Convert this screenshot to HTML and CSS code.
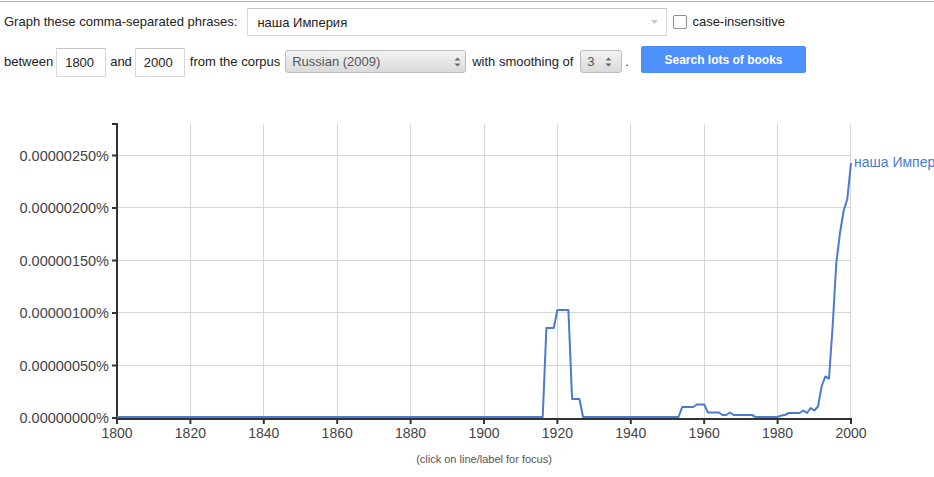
FILE: index.html
```html
<!DOCTYPE html>
<html lang="en">
<head>
<meta charset="utf-8">
<title>Ngram Viewer</title>
<link rel="stylesheet" href="styles.css">
</head>
<body>
<div class="rule"></div>
<form class="controls">
  <div class="row row-phrases">
    <span class="label label-graph">Graph these comma-separated phrases:</span>
    <div class="textbox phrases">
      <span class="value">наша Империя</span>
      <svg class="dd-arrow" width="7" height="4" viewBox="0 0 7 4"><path d="M0 0H7L3.5 4Z" fill="#c8c8c8"/></svg>
    </div>
    <span class="checkbox"></span>
    <span class="label">case-insensitive</span>
  </div>
  <div class="row row-range">
    <span class="label">between</span>
    <div class="textbox year">1800</div>
    <span class="label">and</span>
    <div class="textbox year">2000</div>
    <span class="label label-corpus">from the corpus</span>
    <div class="select corpus">
      <span class="value">Russian (2009)</span>
      <svg class="spinner" width="7" height="12" viewBox="0 0 7 12"><path d="M0.5 4.5L3.5 1.5L6.5 4.5Z M0.5 7.5L3.5 10.5L6.5 7.5Z" fill="#666"/></svg>
    </div>
    <span class="label label-smooth">with smoothing of</span>
    <div class="select smoothing">
      <span class="value">3</span>
      <svg class="spinner" width="7" height="12" viewBox="0 0 7 12"><path d="M0.5 4.5L3.5 1.5L6.5 4.5Z M0.5 7.5L3.5 10.5L6.5 7.5Z" fill="#666"/></svg>
    </div>
    <span class="label label-dot">.</span>
    <button type="button" class="search">Search lots of books</button>
  </div>
</form>

<svg class="chart" width="934" height="340" viewBox="0 110 934 340">
  <g class="grid" stroke="#d6d6d6" stroke-width="1">
    <line x1="118" y1="155.5" x2="851" y2="155.5"/>
    <line x1="118" y1="207.5" x2="851" y2="207.5"/>
    <line x1="118" y1="260.5" x2="851" y2="260.5"/>
    <line x1="118" y1="312.5" x2="851" y2="312.5"/>
    <line x1="118" y1="365.5" x2="851" y2="365.5"/>
    <line x1="190.5" y1="124" x2="190.5" y2="418"/>
    <line x1="263.5" y1="124" x2="263.5" y2="418"/>
    <line x1="337.5" y1="124" x2="337.5" y2="418"/>
    <line x1="410.5" y1="124" x2="410.5" y2="418"/>
    <line x1="484.5" y1="124" x2="484.5" y2="418"/>
    <line x1="557.5" y1="124" x2="557.5" y2="418"/>
    <line x1="630.5" y1="124" x2="630.5" y2="418"/>
    <line x1="704.5" y1="124" x2="704.5" y2="418"/>
    <line x1="777.5" y1="124" x2="777.5" y2="418"/>
    <line x1="850.5" y1="124" x2="850.5" y2="418"/>
  </g>
  <g class="axes" stroke="#333" stroke-width="2">
    <line x1="117" y1="123" x2="117" y2="420"/>
    <line x1="112" y1="124" x2="118" y2="124"/>
    <line x1="112" y1="155.5" x2="117" y2="155.5"/>
    <line x1="112" y1="208" x2="117" y2="208"/>
    <line x1="112" y1="260.5" x2="117" y2="260.5"/>
    <line x1="112" y1="313" x2="117" y2="313"/>
    <line x1="112" y1="365.5" x2="117" y2="365.5"/>
    <line x1="112" y1="418" x2="117" y2="418"/>
    <line x1="116" y1="419" x2="852" y2="419"/>
    <line x1="117" y1="419" x2="117" y2="424"/>
    <line x1="190.4" y1="419" x2="190.4" y2="424"/>
    <line x1="263.8" y1="419" x2="263.8" y2="424"/>
    <line x1="337.2" y1="419" x2="337.2" y2="424"/>
    <line x1="410.6" y1="419" x2="410.6" y2="424"/>
    <line x1="484" y1="419" x2="484" y2="424"/>
    <line x1="557.4" y1="419" x2="557.4" y2="424"/>
    <line x1="630.8" y1="419" x2="630.8" y2="424"/>
    <line x1="704.2" y1="419" x2="704.2" y2="424"/>
    <line x1="777.6" y1="419" x2="777.6" y2="424"/>
    <line x1="851" y1="419" x2="851" y2="424"/>
  </g>
  <g class="ylabels">
    <text x="109" y="160.5">0.00000250%</text>
    <text x="109" y="213">0.00000200%</text>
    <text x="109" y="265.5">0.00000150%</text>
    <text x="109" y="318">0.00000100%</text>
    <text x="109" y="370.5">0.00000050%</text>
    <text x="109" y="423">0.00000000%</text>
  </g>
  <g class="xlabels">
    <text x="117" y="438">1800</text>
    <text x="190.4" y="438">1820</text>
    <text x="263.8" y="438">1840</text>
    <text x="337.2" y="438">1860</text>
    <text x="410.6" y="438">1880</text>
    <text x="484" y="438">1900</text>
    <text x="557.4" y="438">1920</text>
    <text x="630.8" y="438">1940</text>
    <text x="704.2" y="438">1960</text>
    <text x="777.6" y="438">1980</text>
    <text x="851" y="438">2000</text>
  </g>
  <polyline class="series" points="117,417 542.7,417 546.4,328 553.7,328 557.4,310 568.4,310 572.1,399 579.4,399 583.1,417 678.5,417 682.2,407 693.2,407 696.9,404.5 704.2,404.5 707.9,412.5 718.9,412.5 722.6,415 726.2,415 729.9,412.5 733.6,415 751.9,415 755.6,417 777.6,417 781.3,415.5 784.9,415 788.6,413 799.6,413 803.3,410.5 807,413 810.6,408 814.3,410.5 818,406.5 821.6,386.5 825.3,376.5 829,378.5 832.6,327 836.3,263 840,233 843.6,211 847.3,199 851,163"/>
  <text class="series-label" x="854" y="167">наша Империя</text>
</svg>
<p class="caption">(click on line/label for focus)</p>
</body>
</html>
```

FILE: styles.css
```css
html, body {
  margin: 0;
  padding: 0;
  background: #fff;
  overflow: hidden;
}

body {
  font-family: "Liberation Sans", Arial, sans-serif;
  font-size: 13px;
  color: #222;
  width: 934px;
  height: 477px;
}

.rule {
  margin-top: 1px;
  height: 1px;
  background: #b4b4b4;
}

.controls {
  margin: 0;
  padding: 0 0 0 4px;
}

.row {
  display: flex;
  align-items: flex-start;
}

.row-phrases {
  margin-top: 6px;
  height: 28px;
}

.row-range {
  margin-top: 10px;
  height: 31px;
}

.label {
  line-height: 28px;
  white-space: nowrap;
}

.row-range .label {
  line-height: 31px;
}

.label-graph {
  margin-right: 10px;
}

.textbox {
  box-sizing: border-box;
  border: 1px solid #d9d9d9;
  border-top-color: #c6c6c6;
  background: #fff;
  color: #222;
  display: flex;
  align-items: center;
}

.phrases {
  width: 420px;
  height: 28px;
  padding: 0 8px 0 9px;
  justify-content: space-between;
}

.dd-arrow {
  display: block;
}

.checkbox {
  box-sizing: border-box;
  width: 14px;
  height: 14px;
  margin: 7px 5px 0 6px;
  border: 1px solid #8a8a8a;
  border-radius: 2px;
  background: #fff;
}

.year {
  width: 50px;
  height: 29px;
  margin-top: 2px;
  padding-left: 8px;
  margin-left: 3px;
  margin-right: 4px;
}

.label-corpus {
  margin-left: 1px;
  margin-right: 5px;
}

.select {
  box-sizing: border-box;
  height: 23px;
  margin-top: 4px;
  border: 1px solid #bdbdbd;
  border-radius: 3px;
  background: linear-gradient(#f3f3f3, #dadada);
  color: #555;
  display: flex;
  align-items: center;
  justify-content: space-between;
  padding: 0 4px 0 6px;
}

.spinner {
  display: block;
}

.corpus {
  width: 181px;
}

.label-smooth {
  margin-left: 6px;
  margin-right: 7px;
}

.smoothing {
  width: 42px;
  padding-right: 9px;
}

.label-dot {
  margin-left: 3px;
}

.search {
  box-sizing: border-box;
  margin-left: 12px;
  width: 165px;
  height: 27px;
  border: 1px solid #4a8ef5;
  border-radius: 2px;
  background: #4d90fe;
  color: #fff;
  font-family: "Liberation Sans", Arial, sans-serif;
  font-size: 12px;
  font-weight: bold;
  padding: 1px 0 0;
}

.chart {
  display: block;
  margin-top: 33px;
}

.ylabels text {
  font-family: "Liberation Sans", Arial, sans-serif;
  font-size: 14.5px;
  fill: #444;
  text-anchor: end;
}

.xlabels text {
  font-family: "Liberation Sans", Arial, sans-serif;
  font-size: 14px;
  fill: #444;
  text-anchor: middle;
}

.series {
  fill: none;
  stroke: #4a7bd1;
  stroke-width: 2;
  stroke-linejoin: round;
}

.series-label {
  font-family: "Liberation Sans", Arial, sans-serif;
  font-size: 14px;
  fill: #4a7bd1;
}

.caption {
  margin: 2px 0 0 117px;
  width: 734px;
  text-align: center;
  font-size: 11px;
  line-height: 14px;
  color: #555;
}
```
